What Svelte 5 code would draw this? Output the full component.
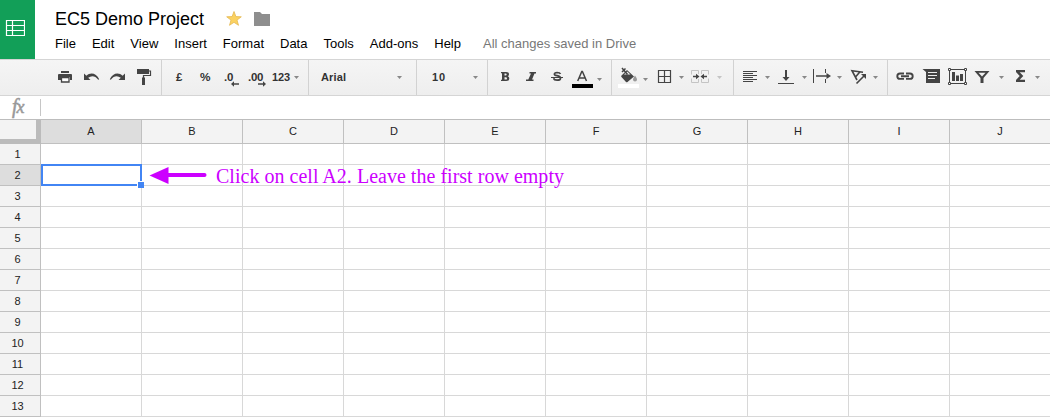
<script>
  const menus = ['File', 'Edit', 'View', 'Insert', 'Format', 'Data', 'Tools', 'Add-ons', 'Help'];
  const columns = ['A', 'B', 'C', 'D', 'E', 'F', 'G', 'H', 'I', 'J'];
  const rows = Array.from({ length: 13 }, (_, i) => i + 1);
</script>

{#snippet caret(x, y = 16)}
  <path class="caret" d="M{x} {y}h5l-2.5 3z" />
{/snippet}

<div class="app">
  <header>
    <div class="logo">
      <svg width="20" height="18" viewBox="0 0 20 18">
        <path d="M1.500 1.500h18v15h-18zM1.500 6.500h18M1.500 11.500h18M7.500 1.500v15" fill="none" stroke="#fff" stroke-width="1.200" />
      </svg>
    </div>
    <div class="heading">
      <div class="titleline">
        <span class="title">EC5 Demo Project</span>
        <svg class="star" width="18" height="18" viewBox="0 0 18 18">
          <path d="M9 1.500l1.900 5.100 5.400.2-4.300 3.300 1.500 5.200L9 12.300l-4.500 3 1.500-5.200-4.300-3.300 5.400-.2z" fill="#fbd261" stroke="#e5b850" stroke-width=".8" />
        </svg>
        <svg class="folder" width="17" height="18" viewBox="0 0 17 18">
          <path d="M0 2h6l2 2h8v12H0z" fill="#8e8e8e" />
        </svg>
      </div>
      <nav>
        {#each menus as menu}<span>{menu}</span>{/each}
        <span class="status">All changes saved in Drive</span>
      </nav>
    </div>
  </header>

  <div class="toolbar">
    <div class="group">
      <svg width="79" viewBox="0 0 79 35"><path d="M61 11h8v2h-8zM59 14h12q1 0 1 1v5h-2v-3h-9v3h-3v-5q0-1 1-1z" /><path d="M61.500 17.500h7.500v4.500h-7.500z" fill="#fff" stroke="#444" stroke-width="1.300" /></svg>
      <svg width="26" viewBox="79 0 26 35"><path d="M84 13.500V20h6.500l-2.300-2.200c3.400-2.500 7-2 10 2l1-.5c-2.700-6-8.700-7.400-12.800-3.500z" /></svg>
      <svg width="26" viewBox="105 0 26 35"><path d="M125 13.500V20h-6.500l2.300-2.200c-3.400-2.500-7-2-10 2l-1-.5c2.700-6 8.700-7.400 12.800-3.500z" /></svg>
      <svg width="30" viewBox="131 0 30 35"><path d="M137 9h12v5h-12zM142 17.500h3V25h-3z" /><path d="M149 11h1.500v4.500h-7v3" fill="none" stroke="#444" stroke-width="1.200" /></svg>
    </div>
    <div class="group">
      <svg width="30" viewBox="162 0 30 35"><text x="176" y="21" font-size="11.5" textLength="7">£</text></svg>
      <svg width="26" viewBox="192 0 26 35"><text x="200" y="21" font-size="11.5" textLength="10.5" lengthAdjust="spacingAndGlyphs">%</text></svg>
      <svg width="25" viewBox="218 0 25 35"><text x="224" y="21" font-size="11.5" textLength="9.5">.0</text><path d="M231 24l3-2.700v2h5v1.500h-5v2z" /></svg>
      <svg width="25" viewBox="243 0 25 35"><text x="248" y="21" font-size="11.5" textLength="15.5">.00</text><path d="M266 24l-3-2.700v2h-5v1.500h5v2z" /></svg>
      <svg width="40" viewBox="268 0 40 35"><text x="272" y="21" font-size="11" textLength="18">123</text>{@render caret(294)}</svg>
    </div>
    <div class="group">
      <svg width="107" viewBox="309 0 107 35"><text x="321" y="21" font-size="11" textLength="25">Arial</text>{@render caret(397)}</svg>
    </div>
    <div class="group">
      <svg width="70" viewBox="417 0 70 35"><text x="432" y="21" font-size="11" textLength="13">10</text>{@render caret(473)}</svg>
    </div>
    <div class="group">
      <svg width="28" viewBox="488 0 28 35"><path fill-rule="evenodd" d="M501 12h5.200q2.800 0 2.800 2.300 0 1.500-1.200 2 1.500.5 1.500 2.200 0 2.500-3.100 2.500H501v-1.300h1v-6.400h-1zM504.500 13.400v2.100h1q1.200 0 1.200-1t-1.200-1.100zM504.500 17.200v2.400h1.200q1.300 0 1.300-1.200t-1.300-1.200z" /></svg>
      <svg width="27" viewBox="516 0 27 35"><path d="M529.500 12h6.500v1.500h-1.500L532 19.500h1.500V21H526v-1.500h2.300l2.700-6h-1.500z" /></svg>
      <svg width="26" viewBox="543 0 26 35"><path d="M560.500 14q-.7-1.500-3.400-1.500-2.700.1-2.700 1.700 0 1 2.600 1.500 3.500.7 3.500 2.500 0 2-3.400 2-3 0-3.500-1.900" fill="none" stroke="#444" stroke-width="1.700" /><path d="M551 17h12v1h-12z" /></svg>
      <svg width="42" viewBox="569 0 42 35"><path d="M577.700 21l4.100-9.500h.6l4.100 9.500M579.200 18h5.800" fill="none" stroke="#444" stroke-width="1.500" /><path d="M572 24h21v4h-21z" fill="#000" />{@render caret(597, 18)}</svg>
    </div>
    <div class="group">
      <svg width="38" viewBox="612 0 38 35"><path d="M621.500 15.500L627 10l7 6.500-6.500 5.500q-.7.600-1.500 0L621.500 17q-.8-.7 0-1.500z" /><path d="M624 14.500l3.200-3 3.300 3z" fill="#eee" /><path d="M622 8l5.500 6.500M622 12l3.500-3.500" fill="none" stroke="#444" stroke-width="1.500" /><path d="M635 15.500q2 2.800 2 4a2 2 0 0 1-4 0q0-1.200 2-4z" fill="#999" /><path d="M618 24h21v4h-21z" fill="#fff" />{@render caret(643, 18)}</svg>
      <svg width="36" viewBox="650 0 36 35"><path d="M658.500 10.500h12v12h-12zM664.500 10.500v12M658.500 16.500h12" fill="none" stroke="#444" stroke-width="1.200" />{@render caret(679)}</svg>
      <svg class="disabled" width="47" viewBox="686 0 47 35"><path d="M698.500 14v-3.500h-7v4m0 4v4h7V19M701.500 14v-3.500h7v4m0 4v4h-7V19" fill="none" stroke="#c4c4c4" /><path d="M693 15.800h3v-2l3.500 2.700-3.500 2.700v-2h-3zM707 15.800h-3v-2l-3.500 2.700 3.500 2.700v-2h3z" />{@render caret(717)}</svg>
    </div>
    <div class="group">
      <svg width="39" viewBox="734 0 39 35"><path d="M743 11h14v1h-14zM743 13h10v1h-10zM743 15h14v1h-14zM743 17h10v1h-10zM743 19h14v1h-14zM743 21h10v1h-10z" />{@render caret(765)}</svg>
      <svg width="37" viewBox="773 0 37 35"><path d="M785 10h2v7h2.500l-3.500 4-3.500-4h2.500zM778 23h16v1h-16z" />{@render caret(802)}</svg>
      <svg width="35" viewBox="810 0 35 35"><path d="M813 9h1v14h-1zM825 9h1v4h-1zM825 19h1v4h-1zM816 15.200h10.500V13l4.500 3-4.500 3v-2.200H816z" />{@render caret(837)}</svg>
      <svg width="42" viewBox="845 0 42 35"><path d="M863 12.300l-11-1.600 5 9.300M852 10.700l11 1.600M860 11.800l-4.500 5.200M856.500 23.500l7.500-7.500" fill="none" stroke="#444" stroke-width="1.600" /><path d="M861 14h5v5z" />{@render caret(873)}</svg>
    </div>
    <div class="group last">
      <svg width="31" viewBox="888 0 31 35"><path d="M904 13.500h-4a2.700 2.700 0 0 0 0 5.400h4M906 13.500h4a2.700 2.700 0 0 1 0 5.400h-4M901 16.200h8" fill="none" stroke="#444" stroke-width="1.900" /></svg>
      <svg width="25" viewBox="919 0 25 35"><path d="M922.500 9H940v14h-14V12z" /><path d="M928 12.500h9M928 15.500h9M928 18.500h7" stroke="#eee" stroke-width="1.200" /></svg>
      <svg width="27" viewBox="944 0 27 35"><path d="M949.500 9.500h16v14h-16z" fill="none" stroke="#444" /><path d="M952 12h3v9h-3zM956 15.500h3V21h-3zM960 14h3v7h-3z" /><path d="M948.500 8.500h2v2h-2zM964.500 8.500h2v2h-2zM948.500 22.500h2v2h-2zM964.500 22.500h2v2h-2z" fill="#fff" stroke="#444" /></svg>
      <svg width="38" viewBox="971 0 38 35"><path fill-rule="evenodd" d="M974.500 11h15l-6 7v5h-3v-5zM978.500 12.800l3.500 3.700 3.500-3.700z" />{@render caret(999)}</svg>
      <svg width="41" viewBox="1009 0 41 35"><path d="M1016 10h9v2.300h-5.300l3.600 3.700-3.600 3.800h5.300V22h-9v-2l3.700-4-3.700-4z" />{@render caret(1035)}</svg>
    </div>
  </div>

  <div class="formula"><span class="fx"><i>f</i><i class="x">x</i></span><span class="divider"></span></div>

  <div class="sheet">
    <div class="corner"></div>
    {#each columns as c}<div class="colhead" class:active={c === 'A'}>{c}</div>{/each}
    {#each rows as r}
      <div class="rowhead" class:active={r === 2}>{r}</div>
      {#each columns as c}
        <div class="cell">
          {#if r === 2 && c === 'A'}
            <div class="selection"><span class="handle"></span></div>
            <div class="note">
              <svg width="58" height="20" viewBox="149 165 58 20"><path d="M149.500 175.500l19-8.500v17z" fill="#c0f" /><path d="M167 175h37.500" stroke="#c0f" stroke-width="4" stroke-linecap="round" /></svg>
              <span>Click on cell A2. Leave the first row empty</span>
            </div>
          {/if}
        </div>
      {/each}
    {/each}
  </div>
</div>

<style>
  :global(body) { background: #fff; overflow: hidden; }
  .app { width: 1050px; height: 417px; overflow: hidden; font-family: "Liberation Sans", Arial, sans-serif; color: #000; }
  header { display: flex; height: 59px; }
  .logo { width: 35px; height: 59px; background: #129f58; padding: 19px 0 0 5px; box-sizing: border-box; }
  .logo svg, .titleline svg { display: block; }
  .heading { padding: 9px 0 0 20px; }
  .titleline { display: flex; height: 20px; align-items: center; }
  .title { width: 149px; font-size: 18px; line-height: 20px; white-space: nowrap; }
  .star { margin-left: 21px; }
  .folder { margin-left: 11px; }
  nav { display: flex; gap: 16px; margin-top: 7px; font-size: 13px; line-height: 16px; white-space: nowrap; }
  .status { margin-left: 6px; color: #777; }
  .toolbar { display: flex; height: 35px; border-top: 1px solid #d5d5d5; border-bottom: 1px solid #d5d5d5; background: linear-gradient(#f5f5f5, #eee); }
  .group { display: flex; border-right: 1px solid #d2d2d2; }
  .group.last { border: 0; }
  .group svg { display: block; height: 35px; fill: #444; flex: none; }
  .group text { font-weight: bold; fill: #333; }
  .caret { fill: #888; }
  .disabled, .disabled .caret { fill: #c4c4c4; }
  .formula { display: flex; height: 23px; border-bottom: 1px solid #bdbdbd; }
  .fx { width: 40px; box-sizing: border-box; padding-left: 12px; font: 20px/20px "Liberation Serif", serif; color: #999; -webkit-text-stroke: .5px #999; }
  .fx .x { font-size: 18px; margin-left: -1px; }
  .divider { width: 1px; height: 17px; margin-top: 3px; background: #c6c6c6; }
  .sheet { display: grid; grid-template-columns: 41px repeat(10, 101px); grid-template-rows: 24px repeat(13, 21px); font-size: 11px; color: #222; }
  .sheet > div { box-sizing: border-box; }
  .corner { background: #f3f3f3; border-right: 5px solid #bbb; border-bottom: 5px solid #bbb; }
  .colhead, .rowhead { display: flex; align-items: center; justify-content: center; background: #f3f3f3; border-right: 1px solid #c0c0c0; border-bottom: 1px solid #c0c0c0; }
  .colhead { padding-bottom: 1px; }
  .rowhead { padding-right: 5px; }
  .active { background: #ddd; }
  .cell { position: relative; border-right: 1px solid #d8d8d8; border-bottom: 1px solid #d8d8d8; }
  .selection { position: absolute; z-index: 1; inset: -1px -1px -1px 0; border: 2px solid #4285f4; box-sizing: border-box; }
  .handle { position: absolute; right: -4px; bottom: -4px; width: 6px; height: 6px; background: #4285f4; border: solid #fff; border-width: 1px 0 0 1px; }
  .note { position: absolute; z-index: 2; left: 108px; top: -1px; display: flex; align-items: center; height: 21px; white-space: nowrap; color: #c0f; font: 20px/22px "Liberation Serif", serif; letter-spacing: .02px; }
  .note span { margin: 2px 0 0 9px; }
</style>
